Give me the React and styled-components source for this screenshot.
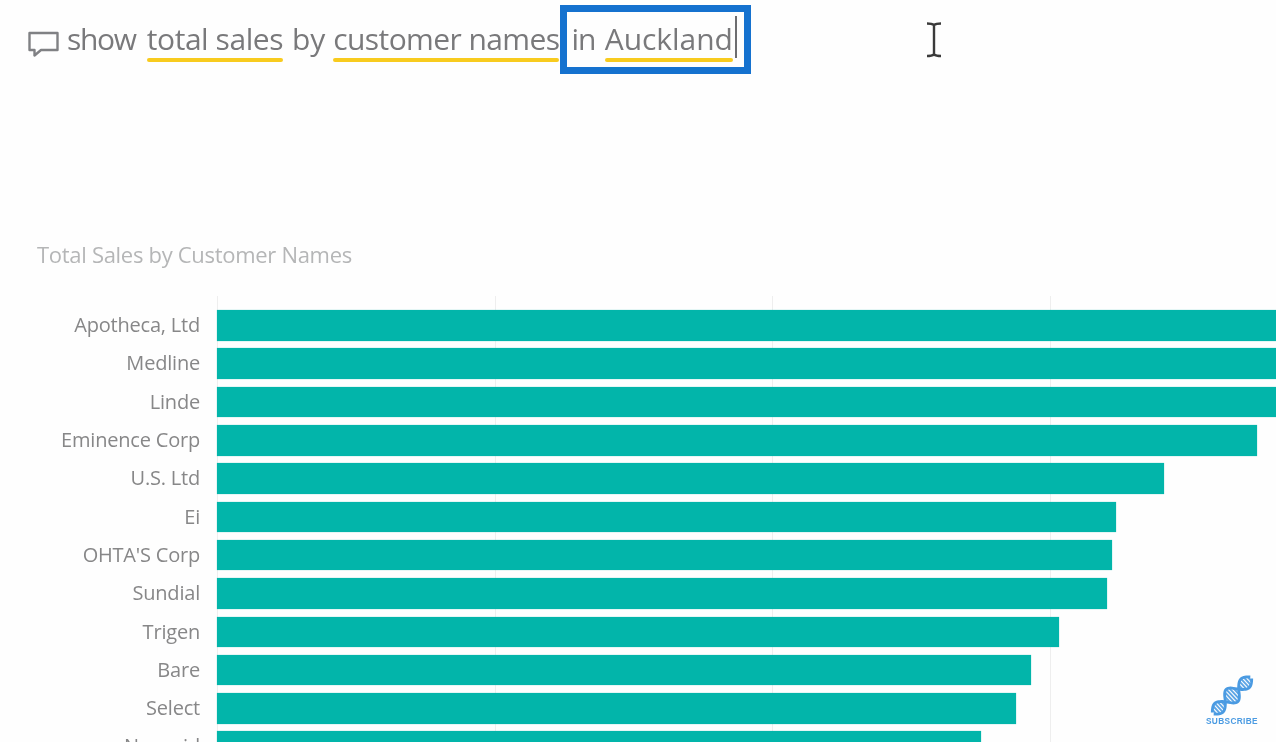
import React from "react";
import styled, { createGlobalStyle } from "styled-components";

const Global = createGlobalStyle`
  html, body { margin: 0; padding: 0; background: #fefefe; }
  body { font-family: "Open Sans", "Noto Sans", sans-serif; }
`;

const Page = styled.div`
  position: relative;
  width: 1276px;
  height: 742px;
  overflow: hidden;
  background: #fefefe;
`;

const QueryBar = styled.div`
  display: flex;
  align-items: baseline;
  height: 236px;
  box-sizing: border-box;
  padding: 19px 0 0 28px;
  color: #79797b;
  font-size: 30px;
  line-height: 40px;
  white-space: nowrap;
  filter: blur(0.5px);
`;

const BubbleIcon = styled.svg`
  width: 32px;
  height: 30px;
  margin-right: 7px;
  align-self: flex-start;
  margin-top: 10px;
  flex: none;
`;

const QueryText = styled.div`
  display: flex;
`;

const Word = styled.span`
  position: relative;
  margin-left: ${(p) => p.$gap}px;
  letter-spacing: ${(p) => p.$track}px;
  ${(p) =>
    p.$linked &&
    `&::after {
      content: "";
      position: absolute;
      left: 0;
      right: 0;
      bottom: -3px;
      height: 4px;
      border-radius: 2px;
      background: #f8cb1e;
    }`}
`;

const Caret = styled.span`
  position: absolute;
  left: 735px;
  top: 16px;
  width: 2px;
  height: 42px;
  background: #6d6d70;
`;

const Highlight = styled.div`
  position: absolute;
  left: 560px;
  top: 5px;
  width: 177px;
  height: 55px;
  border: 7px solid #1572cf;
`;

const Cursor = styled.svg`
  position: absolute;
  left: 924px;
  top: 21px;
  width: 20px;
  height: 38px;
`;

const ChartTitle = styled.h2`
  margin: 0 0 0 37px;
  height: 60px;
  padding-top: 3px;
  box-sizing: border-box;
  font-size: 22px;
  line-height: 30px;
  font-weight: 400;
  letter-spacing: -0.3px;
  color: #b5b6b7;
  filter: blur(0.5px);
`;

const Chart = styled.div`
  display: grid;
  grid-template-columns: 200px 1fr;
  column-gap: 17px;
`;

const Labels = styled.div`
  display: grid;
  grid-auto-rows: 30.6px;
  row-gap: 7.72px;
  padding-top: 14px;
  filter: blur(0.45px);
`;

const Label = styled.div`
  text-align: right;
  font-size: 20px;
  line-height: 30px;
  letter-spacing: -0.2px;
  color: #878788;
  white-space: nowrap;
`;

const Plot = styled.div`
  display: grid;
  grid-auto-rows: 30.6px;
  row-gap: 7.72px;
  padding-top: 14px;
  height: 500px;
  background-image:
    linear-gradient(#eeeeee, #eeeeee),
    linear-gradient(#eeeeee, #eeeeee),
    linear-gradient(#eeeeee, #eeeeee),
    linear-gradient(#eeeeee, #eeeeee);
  background-size: 1px 100%;
  background-repeat: no-repeat;
  background-position: 0 0, 278px 0, 555px 0, 833px 0;
`;

const Bar = styled.div`
  height: 100%;
  background: #02b5aa;
  box-shadow: 0 0 1px rgba(2, 181, 170, 0.6);
`;

const Badge = styled.div`
  position: absolute;
  left: 1199px;
  top: 675px;
  width: 66px;
  display: flex;
  flex-direction: column;
  align-items: center;
  filter: blur(0.35px);
`;

const Dna = styled.svg`
  width: 44px;
  height: 41px;
`;

const BadgeText = styled.span`
  font-family: "Liberation Sans", Arial, sans-serif;
  font-size: 8.3px;
  line-height: 11px;
  font-weight: 700;
  letter-spacing: 0.35px;
  color: #4b9be2;
`;

const customers = [
  ["Apotheca, Ltd", 1100],
  ["Medline", 1100],
  ["Linde", 1100],
  ["Eminence Corp", 1040],
  ["U.S. Ltd", 947],
  ["Ei", 899],
  ["OHTA'S Corp", 895],
  ["Sundial", 890],
  ["Trigen", 842],
  ["Bare", 814],
  ["Select", 799],
  ["Nanosid", 764],
];

const query = [
  { text: "show", gap: 0, track: -1.3 },
  { text: "total sales", gap: 11, track: -0.45, linked: true },
  { text: "by", gap: 9, track: -0.05 },
  { text: "customer names", gap: 8, track: -0.6, linked: true },
  { text: "in", gap: 12, track: -1.05 },
  { text: "Auckland", gap: 9.5, track: -0.05, linked: true },
];

// Strand amplitude along the helix axis: a large centre lobe and two smaller end lobes.
const helixY = (x) => {
  const lobe = Math.abs(x) < 9 ? 8.5 : 6;
  return lobe * Math.cos((x * Math.PI) / 18);
};
const xs = Array.from({ length: 53 }, (_, i) => i - 26);
const strand = (sign) =>
  xs.map((x, i) => `${i ? "L" : "M"}${x} ${(sign * helixY(x)).toFixed(2)}`).join("");
const rungs = xs.filter((x) => x % 3 === 0 && Math.abs(helixY(x)) > 1.5);

export default function App() {
  return (
    <Page>
      <Global />
      <QueryBar>
        <BubbleIcon viewBox="0 0 32 30" fill="none" stroke="#808184" strokeWidth="2.4">
          <path d="M1.500 4h28v17H13L6.500 26.500V21H1.500z" strokeLinejoin="round" />
        </BubbleIcon>
        <QueryText>
          {query.map((w) => (
            <Word key={w.text} $gap={w.gap} $track={w.track} $linked={w.linked}>
              {w.text}
            </Word>
          ))}
        </QueryText>
      </QueryBar>
      <Caret />
      <Highlight />
      <Cursor viewBox="0 0 20 38" fill="none" stroke="#3a3a3a" strokeWidth="2.4">
        <path d="M3 2.500c3 0 5 0 7 1.500c2-1.500 4-1.500 7-1.500M10 4v30M3 35c3 0 5 0 7-1.500c2 1.500 4 1.500 7 1.500" />
      </Cursor>
      <ChartTitle>Total Sales by Customer Names</ChartTitle>
      <Chart>
        <Labels>
          {customers.map(([name]) => (
            <Label key={name}>{name}</Label>
          ))}
        </Labels>
        <Plot>
          {customers.map(([name, width]) => (
            <Bar key={name} style={{ width }} />
          ))}
        </Plot>
      </Chart>
      <Badge>
        <Dna viewBox="-22 -20.500 44 41" fill="none">
          <g transform="rotate(-43)" stroke="#4b9be2">
            <path d={strand(1)} strokeWidth="2.8" />
            <path d={strand(-1)} strokeWidth="2.8" />
            {rungs.map((x) => (
              <line
                key={x}
                x1={x}
                x2={x}
                y1={-Math.abs(helixY(x))}
                y2={Math.abs(helixY(x))}
                strokeWidth="1.9"
                opacity="0.9"
              />
            ))}
          </g>
        </Dna>
        <BadgeText>SUBSCRIBE</BadgeText>
      </Badge>
    </Page>
  );
}
